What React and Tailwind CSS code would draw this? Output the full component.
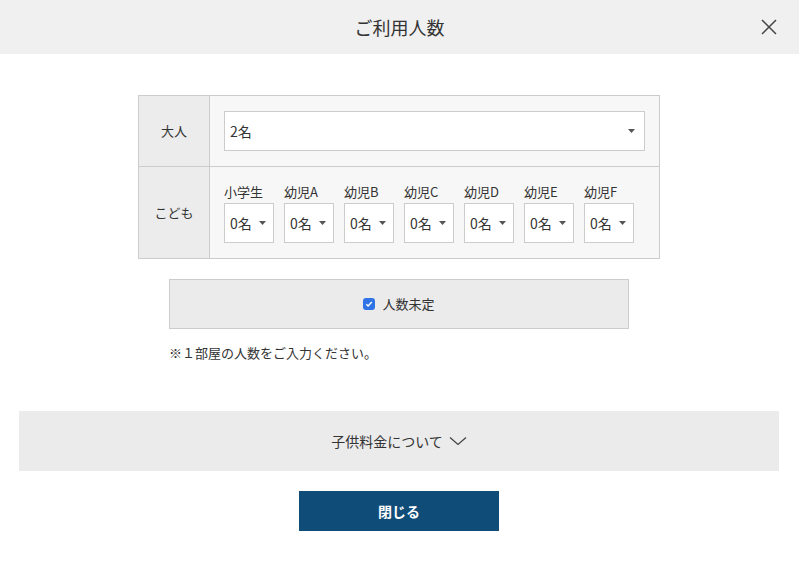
const font = { fontFamily: '"Noto Sans CJK JP", "Noto Sans", sans-serif' };

const Caret = () => (
  <svg width="7" height="4" viewBox="0 0 7 4" className="shrink-0">
    <path d="M0 0h7L3.5 4z" fill="#555" />
  </svg>
);

const SmallSelect = ({ label, value }) => (
  <div className="flex flex-col">
    <span className="h-[21px] text-[13px] leading-5 text-[#333]">{label}</span>
    <div className="flex h-10 w-[50px] items-center justify-between border border-[#ccc] bg-white pl-[5px] pr-[7px] text-[14px] text-[#333]">
      <span>{value}</span>
      <Caret />
    </div>
  </div>
);

export default function App() {
  const kids = ["小学生", "幼児A", "幼児B", "幼児C", "幼児D", "幼児E", "幼児F"];

  return (
    <div className="min-h-[570px] w-[798px] bg-white text-[#333]" style={font}>
      {/* header */}
      <div className="relative flex h-[54px] w-[799px] items-center justify-center bg-[#f0f0f0]">
        <h1 className="text-[18px] font-normal">ご利用人数</h1>
        <button className="absolute right-[22px] top-[19px] flex h-4 w-4 items-center justify-center">
          <svg width="16" height="16" viewBox="0 0 16 16">
            <path d="M1 1l14 14M15 1L1 15" stroke="#444" strokeWidth="1.5" />
          </svg>
        </button>
      </div>

      <div className="flex flex-col items-center pt-[41px]">
        {/* table */}
        <div className="w-[522px] border border-[#ccc] text-[13px]">
          <div className="flex h-[71px] border-b border-[#ccc]">
            <div className="flex w-[71px] items-center justify-center border-r border-[#ccc] bg-[#ececec]">
              大人
            </div>
            <div className="flex flex-1 items-center bg-[#f7f7f7] px-[14px]">
              <div className="flex h-10 w-full items-center justify-between border border-[#ccc] bg-white pl-[5px] pr-[9px] text-[14px]">
                <span>2名</span>
                <Caret />
              </div>
            </div>
          </div>
          <div className="flex h-[91px]">
            <div className="flex w-[71px] items-center justify-center border-r border-[#ccc] bg-[#ececec]">
              こども
            </div>
            <div className="flex flex-1 gap-[10px] bg-[#f7f7f7] px-[14px] pt-[15px]">
              {kids.map((k) => (
                <SmallSelect key={k} label={k} value="0名" />
              ))}
            </div>
          </div>
        </div>

        {/* undecided */}
        <div className="mt-5 flex h-[50px] w-[460px] items-center justify-center gap-[7px] border border-[#ccc] bg-[#ebebeb] text-[13px]">
          <span className="flex h-3 w-3 items-center justify-center rounded-[3px] bg-[#2f73e6]">
            <svg width="8" height="8" viewBox="0 0 8 8">
              <path d="M1.3 4.2l1.8 1.8L6.8 2" stroke="white" strokeWidth="1.4" fill="none" />
            </svg>
          </span>
          <span>人数未定</span>
        </div>

        <p className="mt-[14px] w-[460px] text-[13px] leading-5">※１部屋の人数をご入力ください。</p>
      </div>

      {/* child fee accordion */}
      <div className="mx-[19px] mt-[48px] flex h-[60px] items-center justify-center gap-[6px] bg-[#ebebeb] text-[14px]">
        <span>子供料金について</span>
        <svg width="18" height="10" viewBox="0 0 18 10">
          <path d="M1 1.5l8 7 8-7" stroke="#444" strokeWidth="1.3" fill="none" />
        </svg>
      </div>

      <div className="mt-5 flex justify-center">
        <button className="flex h-10 w-[200px] items-center justify-center bg-[#0f4c78] text-[14px] font-bold text-white">
          閉じる
        </button>
      </div>
    </div>
  );
}
